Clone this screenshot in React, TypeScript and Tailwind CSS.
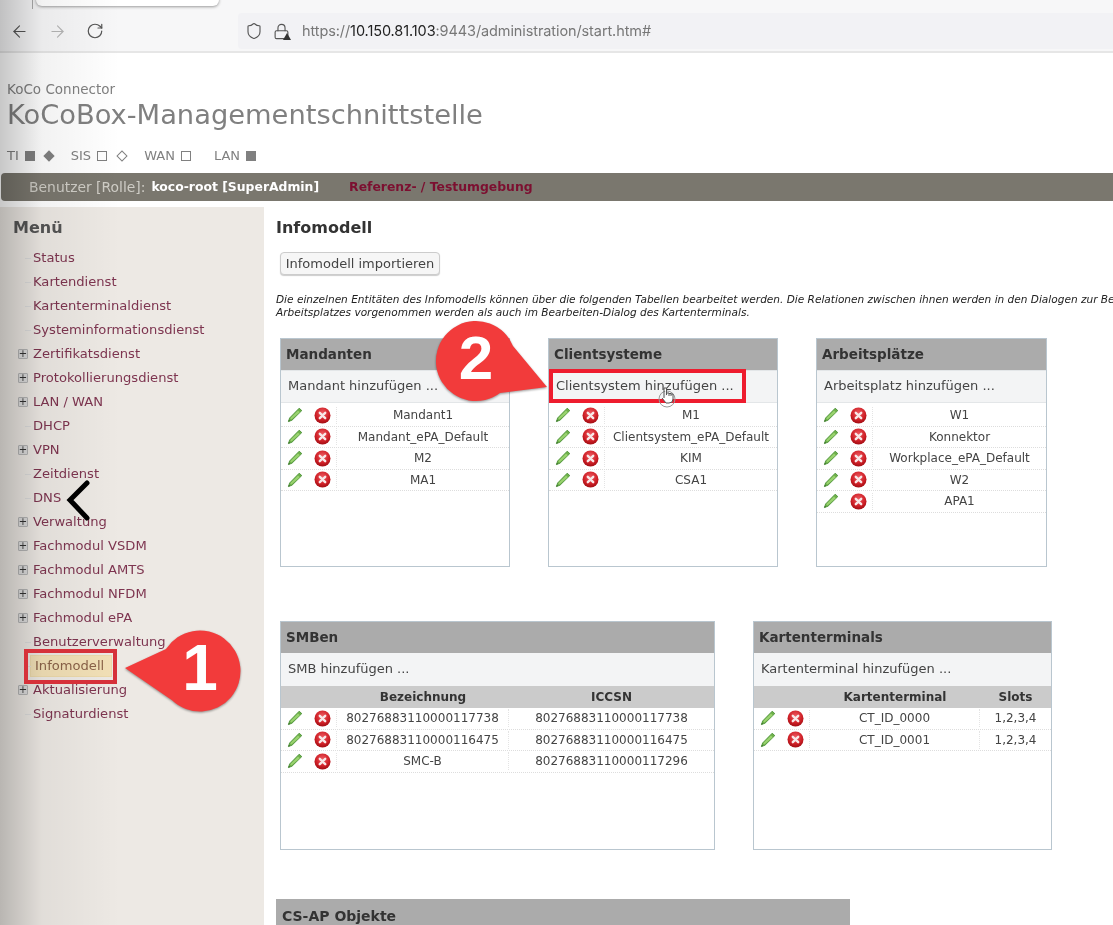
import { ArrowLeft, ArrowRight, RotateCw, Shield, Lock } from 'lucide-react';

const menu = [
  { label: 'Status' },
  { label: 'Kartendienst' },
  { label: 'Kartenterminaldienst' },
  { label: 'Systeminformationsdienst' },
  { label: 'Zertifikatsdienst', plus: true },
  { label: 'Protokollierungsdienst', plus: true },
  { label: 'LAN / WAN', plus: true },
  { label: 'DHCP' },
  { label: 'VPN', plus: true },
  { label: 'Zeitdienst' },
  { label: 'DNS' },
  { label: 'Verwaltung', plus: true },
  { label: 'Fachmodul VSDM', plus: true },
  { label: 'Fachmodul AMTS', plus: true },
  { label: 'Fachmodul NFDM', plus: true },
  { label: 'Fachmodul ePA', plus: true },
  { label: 'Benutzerverwaltung' },
  { label: 'Infomodell', active: true },
  { label: 'Aktualisierung', plus: true },
  { label: 'Signaturdienst' },
];

function Pencil() {
  return (
    <svg width="16" height="16" viewBox="0 0 16 16" className="shrink-0">
      <path d="M12.2 1.2 L14.8 3.6 L5 13.2 L1.4 14.6 L2.6 11 Z" fill="#6fb04a" stroke="#3f8a2c" strokeWidth="0.8" />
      <path d="M11 3.4 L12.8 5.2 L4.4 12.6 L3.2 11.2 Z" fill="#9ad36f" />
      <path d="M1.4 14.6 L1.9 12.9 L3.1 14 Z" fill="#2f5f22" />
    </svg>
  );
}

function Remove() {
  return (
    <svg width="17" height="17" viewBox="0 0 17 17" className="shrink-0">
      <defs>
        <radialGradient id="redBall" cx="0.5" cy="0.35" r="0.7">
          <stop offset="0" stopColor="#ee5b62" />
          <stop offset="0.6" stopColor="#cf2027" />
          <stop offset="1" stopColor="#98090f" />
        </radialGradient>
      </defs>
      <circle cx="8.5" cy="8.5" r="8" fill="url(#redBall)" />
      <path d="M5.8 5.8 L11.2 11.2 M11.2 5.8 L5.8 11.2" stroke="#f8e8e8" strokeWidth="2.4" strokeLinecap="round" />
    </svg>
  );
}

function Actions() {
  return (
    <div className="flex w-[56px] shrink-0 items-center gap-[11px] border-r border-dotted border-[#e4e4e4] pl-[6px]">
      <Pencil />
      <Remove />
    </div>
  );
}

function ListCard({ title, add, rows }: { title: string; add: string; rows: string[] }) {
  return (
    <div className="h-[229px] border border-[#b9c6cf] bg-white">
      <div className="flex h-[31px] items-center bg-[#ababab] px-[5px] text-[13.5px] font-bold text-[#333]">{title}</div>
      <div className="mb-[2px] flex h-[33px] items-center border-y border-[#e3e6e8] bg-[#f3f4f5] px-[7px] pb-[2px] text-[13px] text-[#444]">{add}</div>
      {rows.map((r) => (
        <div key={r} className="flex h-[21.5px] items-center border-b border-dotted border-[#ddd] text-[12px] text-[#444]">
          <Actions />
          <div className="flex-1 text-center whitespace-nowrap">{r}</div>
        </div>
      ))}
    </div>
  );
}

function TableCard({
  title,
  add,
  head,
  rows,
  cols,
}: {
  title: string;
  add: string;
  head: string[];
  rows: string[][];
  cols: string[];
}) {
  return (
    <div className="h-[229px] border border-[#b9c6cf] bg-white">
      <div className="flex h-[31px] items-center bg-[#ababab] px-[5px] text-[13.5px] font-bold text-[#333]">{title}</div>
      <div className="flex h-[33px] items-center bg-[#f3f4f5] px-[7px] pb-[2px] text-[13px] text-[#444]">{add}</div>
      <div className="flex h-[22px] items-center bg-[#cbcbcb] text-[12px] font-bold text-[#333]">
        <div className="w-[56px] shrink-0" />
        {head.map((h, i) => (
          <div key={h} className={`${cols[i]} text-center`}>
            {h}
          </div>
        ))}
      </div>
      {rows.map((r) => (
        <div key={r.join()} className="flex h-[21.5px] items-center border-b border-dotted border-[#ddd] text-[12px] text-[#444]">
          <Actions />
          {r.map((c, i) => (
            <div key={i} className={`${cols[i]} text-center whitespace-nowrap ${i === 0 ? 'border-r border-dotted border-[#e4e4e4]' : ''}`}>
              {c}
            </div>
          ))}
        </div>
      ))}
    </div>
  );
}

export default function App() {
  return (
    <div className="relative h-[925px] w-[1113px] overflow-hidden bg-white font-['DejaVu_Sans',sans-serif]">
      <div className="blur-[0.5px]">
        {/* browser chrome */}
        <div className="h-[53px] border-b-2 border-[#e6e6e6] bg-[#f7f7f8]">
          <div className="relative h-[13px]">
            <div className="absolute top-0 left-[32px] h-[9px] w-px bg-[#aaa]" />
            <div className="absolute top-[-6px] left-[36px] h-[12px] w-[183px] rounded-b-md bg-white shadow-[0_1px_3px_#999]" />
          </div>
          <div className="flex h-[36px] items-center">
            <div className="flex w-[238px] items-center gap-[19px] pl-[10px]">
              <ArrowLeft size={19} strokeWidth={1.4} className="text-[#555]" />
              <ArrowRight size={19} strokeWidth={1.4} className="text-[#b5b5b5]" />
              <RotateCw size={18} strokeWidth={1.6} className="text-[#555]" />
            </div>
            <div className="flex h-[36px] flex-1 items-center rounded-l bg-[#f2f2f5] pl-[7px] font-['Inter',sans-serif] text-[14.5px] tracking-[-0.1px] text-[#777]">
              <Shield size={18} strokeWidth={1.5} className="text-[#555]" />
              <div className="relative ml-[10px] mr-[12px]">
                <Lock size={17} strokeWidth={1.6} className="text-[#555]" />
                <div className="absolute right-[-1px] bottom-0 size-0 border-x-[4px] border-b-[7px] border-x-transparent border-b-[#333]" />
              </div>
              https://<span className="text-[#222]">10.150.81.103</span>:9443/administration/start.htm#
            </div>
          </div>
        </div>

        {/* page head */}
        <div className="h-[120px] pt-[28px] pl-[7px] text-[#808080]">
          <div className="text-[13.5px] leading-[16px]">KoCo Connector</div>
          <div className="text-[27.3px] leading-[36px]">KoCoBox-Managementschnittstelle</div>
          <div className="mt-[15px] flex items-center text-[13px] leading-[16px]">
            <span>TI</span>
            <span className="ml-[6px] size-[10px] bg-[#808080]" />
            <span className="ml-[10.5px] size-[8px] rotate-45 bg-[#808080]" />
            <span className="ml-[17.5px]">SIS</span>
            <span className="ml-[6px] size-[10px] border border-[#808080]" />
            <span className="ml-[10.5px] size-[8px] rotate-45 border border-[#808080]" />
            <span className="ml-[18.5px]">WAN</span>
            <span className="ml-[6px] size-[10px] border border-[#808080]" />
            <span className="ml-[23px]">LAN</span>
            <span className="ml-[6px] size-[10px] bg-[#808080]" />
          </div>
        </div>

        <div className="ml-px flex h-[28px] items-center rounded-l bg-[#7a776e] pl-[28px] text-[13.9px] text-[#cfcdc6]">
          Benutzer [Rolle]:
          <span className="ml-[6px] text-[12.4px] font-bold text-white">koco-root [SuperAdmin]</span>
          <span className="ml-[30px] text-[12.4px] font-bold text-[#7c0f30]">Referenz- / Testumgebung</span>
        </div>

        <div className="mt-[6px] flex">
          {/* sidebar */}
          <div className="h-[720px] w-[264px] shrink-0 bg-[#ede9e4] pt-[12px] pl-[13px]">
            <div className="text-[16px] leading-[18px] font-bold text-[#555]">Menü</div>
            <div className="mt-[9px]">
              {menu.map((m) => (
                <div key={m.label} className="relative flex h-[24px] items-center pl-[20px] text-[13.1px] text-[#7e3550]">
                  {m.plus ? (
                    <div className="absolute left-[5px] flex size-[10px] items-center justify-center rounded-[1px] border border-[#b5b5b5] bg-[#ddd] text-[10px] leading-none text-[#333]">
                      +
                    </div>
                  ) : (
                    <div className="absolute left-[12px] h-px w-[6px] bg-[#ddd]" />
                  )}
                  {m.active ? (
                    <span className="-ml-[3px] flex h-[22px] w-[82px] items-center border border-[#ecd9aa] bg-[#f2e0b6] pl-[4px] text-[#8a6248]">{m.label}</span>
                  ) : (
                    m.label
                  )}
                </div>
              ))}
            </div>
          </div>

          {/* content */}
          <div className="min-w-0 flex-1 pl-[12px]">
            <h1 className="mt-[9px] text-[16px] leading-[24px] font-bold text-[#333]">Infomodell</h1>
            <button className="mt-[12px] ml-[4px] h-[23px] w-[160px] rounded border border-[#ccc] bg-[#f6f6f6] text-[13px] text-[#444] shadow-[0_1px_1px_#ccc]">
              Infomodell importieren
            </button>
            <p className="mt-[18px] text-[10.55px] leading-[13px] whitespace-nowrap text-[#222] italic">
              Die einzelnen Entitäten des Infomodells können über die folgenden Tabellen bearbeitet werden. Die Relationen
              zwischen ihnen werden in den Dialogen zur Be
              <br />
              Arbeitsplatzes vorgenommen werden als auch im Bearbeiten-Dialog des Kartenterminals.
            </p>
            <div className="mt-[19px] ml-[4px] grid w-[767px] grid-cols-[230px_230px_231px] gap-x-[38px]">
              <ListCard title="Mandanten" add="Mandant hinzufügen ..." rows={['Mandant1', 'Mandant_ePA_Default', 'M2', 'MA1']} />
              <ListCard title="Clientsysteme" add="Clientsystem hinzufügen ..." rows={['M1', 'Clientsystem_ePA_Default', 'KIM', 'CSA1']} />
              <ListCard title="Arbeitsplätze" add="Arbeitsplatz hinzufügen ..." rows={['W1', 'Konnektor', 'Workplace_ePA_Default', 'W2', 'APA1']} />
            </div>
            <div className="mt-[54px] ml-[4px] flex gap-x-[38px]">
              <div className="w-[435px]">
                <TableCard
                  title="SMBen"
                  add="SMB hinzufügen ..."
                  head={['Bezeichnung', 'ICCSN']}
                  cols={['w-[172px]', 'flex-1']}
                  rows={[
                    ['80276883110000117738', '80276883110000117738'],
                    ['80276883110000116475', '80276883110000116475'],
                    ['SMC-B', '80276883110000117296'],
                  ]}
                />
              </div>
              <div className="w-[299px]">
                <TableCard
                  title="Kartenterminals"
                  add="Kartenterminal hinzufügen ..."
                  head={['Kartenterminal', 'Slots']}
                  cols={['w-[170px]', 'flex-1']}
                  rows={[
                    ['CT_ID_0000', '1,2,3,4'],
                    ['CT_ID_0001', '1,2,3,4'],
                  ]}
                />
              </div>
            </div>
            <div className="mt-[49px] flex h-[31px] w-[574px] items-center bg-[#ababab] px-[6px] pt-[3px] text-[14px] font-bold text-[#333]">
              CS-AP Objekte
            </div>
          </div>
        </div>
      </div>

      {/* left edge shading of the frame */}
      <div className="pointer-events-none absolute inset-y-0 left-0 w-[120px] bg-gradient-to-r from-[#00000038] via-[#0000000d] via-35% to-transparent" />

      {/* annotations */}
      <div className="absolute top-[649px] left-[24px] h-[35px] w-[93px] border-4 border-[#d6313a]" />
      <div className="absolute top-[369px] left-[549px] h-[34px] w-[197px] border-4 border-[#ee1c2e]" />

      <svg className="absolute top-[480px] left-[62px]" width="32" height="42" viewBox="0 0 32 42">
        <path d="M25 3 L8 20 L25 38" fill="none" stroke="#000" strokeWidth="5" strokeLinecap="round" strokeLinejoin="miter" />
      </svg>

      <svg className="absolute top-[620px] left-[120px] drop-shadow-[0_1px_1px_#0006]" width="126" height="100" viewBox="0 0 126 100">
        <path d="M5 48 L46 29 A40.5 40.5 0 1 1 52 80.3 Z" fill="#f23b3b" />
      </svg>
      <div className="absolute top-[635px] left-[179px] w-[42px] text-center font-['Liberation_Sans',sans-serif] text-[64px] leading-[66px] font-bold text-white">
        1
      </div>

      <svg className="absolute top-[316px] left-[434px] drop-shadow-[0_1px_1px_#0006]" width="118" height="90" viewBox="0 0 118 90">
        <path d="M113 71 L66 77 A40 40 0 1 1 79 30 Z" fill="#f23b3b" />
      </svg>
      <div className="absolute top-[325px] left-[454px] w-[44px] text-center font-['Liberation_Sans',sans-serif] text-[62px] leading-[66px] font-bold text-white">
        2
      </div>

      {/* mouse pointer */}
      <svg className="absolute top-[385px] left-[658px]" width="20" height="26" viewBox="0 0 20 26">
        <circle cx="9" cy="14" r="8" fill="none" stroke="#999" strokeWidth="1" />
        <path d="M6 3 V13 M6 3 H8.5 V10 M8.5 8 H11 V11 M11 8.5 H13 V11 M13 9 H15 V14 Q15 18 11 18 H8 L4 13" fill="#fff" stroke="#555" strokeWidth="1" />
      </svg>
    </div>
  );
}
